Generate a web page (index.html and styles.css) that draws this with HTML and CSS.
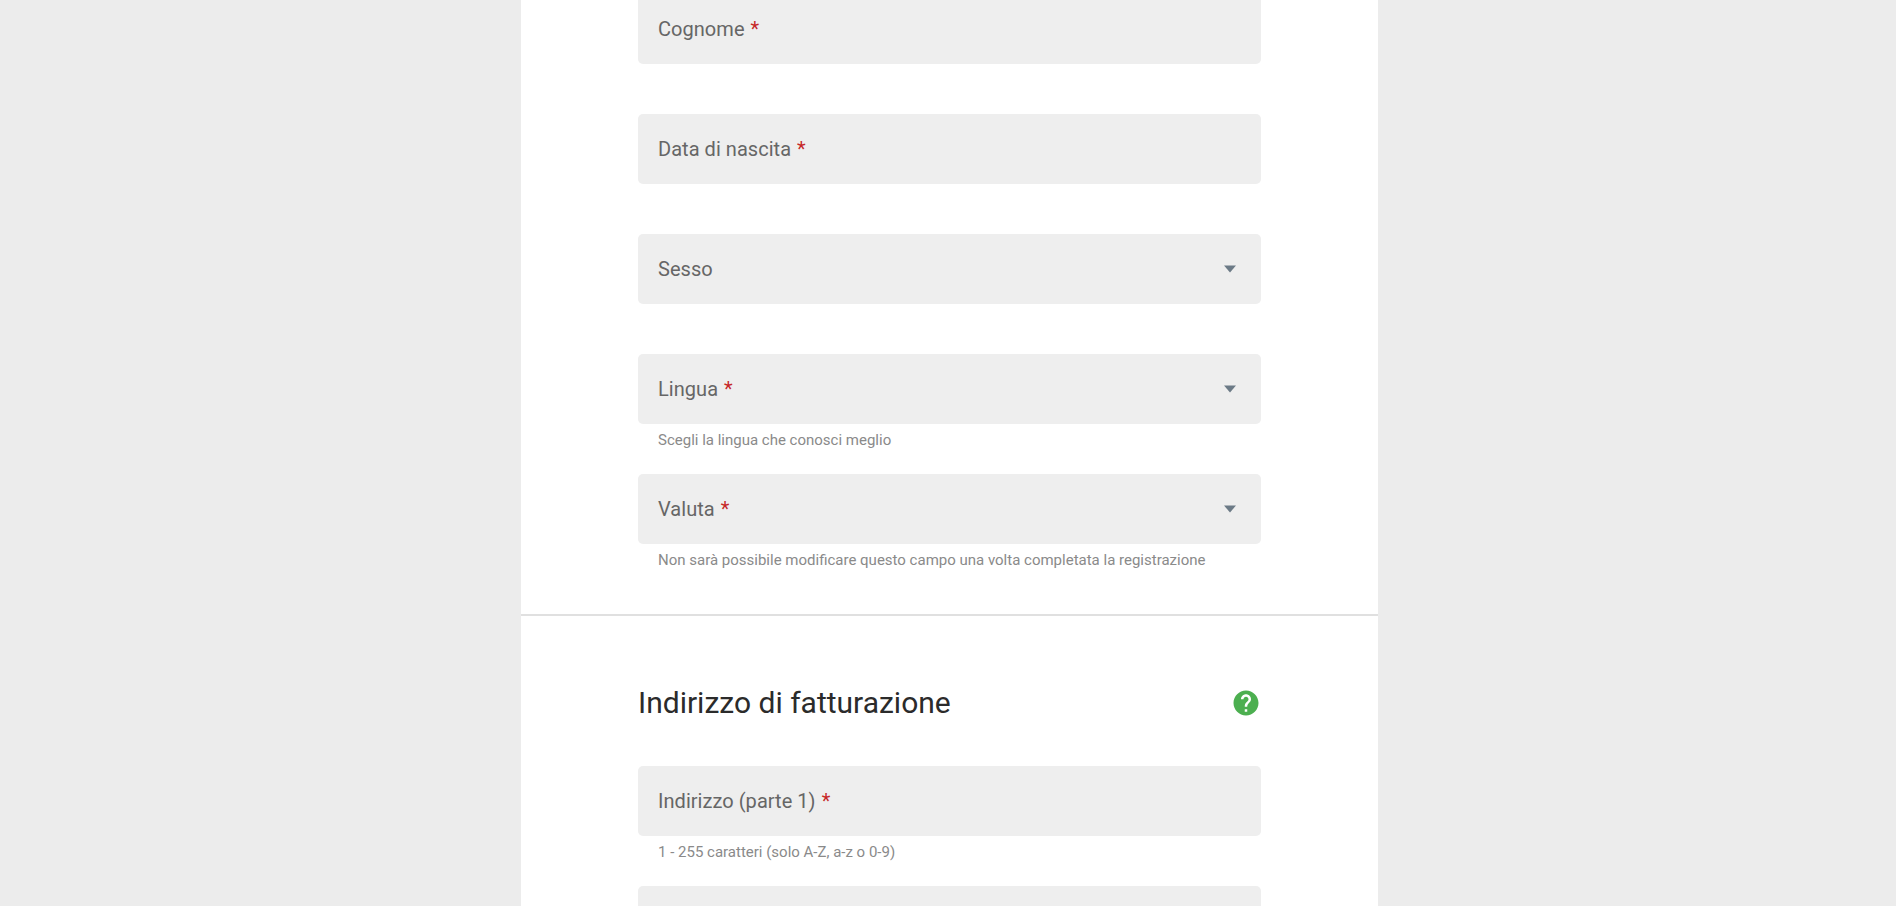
FILE: index.html
```html
<!DOCTYPE html>
<html lang="it">
<head>
  <meta charset="UTF-8">
  <title>Registrazione</title>
  <link rel="stylesheet" href="styles.css">
</head>
<body>
  <main class="card">
    <section class="section section-personal">
      <div class="form-group">
        <div class="field"><span class="label">Cognome <span class="required">*</span></span></div>
      </div>
      <div class="form-group">
        <div class="field"><span class="label">Data di nascita <span class="required">*</span></span></div>
      </div>
      <div class="form-group">
        <div class="field">
          <span class="label">Sesso</span>
          <svg class="arrow" viewBox="0 0 12 8"><path d="M0 0.5h12L6 7.5z"/></svg>
        </div>
      </div>
      <div class="form-group">
        <div class="field">
          <span class="label">Lingua <span class="required">*</span></span>
          <svg class="arrow" viewBox="0 0 12 8"><path d="M0 0.5h12L6 7.5z"/></svg>
        </div>
        <p class="helper">Scegli la lingua che conosci meglio</p>
      </div>
      <div class="form-group">
        <div class="field">
          <span class="label">Valuta <span class="required">*</span></span>
          <svg class="arrow" viewBox="0 0 12 8"><path d="M0 0.5h12L6 7.5z"/></svg>
        </div>
        <p class="helper">Non sarà possibile modificare questo campo una volta completata la registrazione</p>
      </div>
    </section>

    <section class="section section-billing">
      <div class="section-header">
        <h2>Indirizzo di fatturazione</h2>
        <svg class="help" viewBox="0 0 24 24"><path d="M12 2C6.480 2 2 6.480 2 12s4.480 10 10 10 10-4.480 10-10S17.520 2 12 2zm1 17h-2v-2h2v2zm2.070-7.750l-.9.920C13.450 12.900 13 13.500 13 15h-2v-.5c0-1.100.450-2.100 1.170-2.830l1.240-1.260c.370-.360.590-.860.590-1.410 0-1.100-.9-2-2-2s-2 .9-2 2H8c0-2.210 1.790-4 4-4s4 1.790 4 4c0 .880-.360 1.680-.930 2.250z"/></svg>
      </div>
      <div class="form-group">
        <div class="field"><span class="label">Indirizzo (parte 1) <span class="required">*</span></span></div>
        <p class="helper">1 - 255 caratteri (solo A-Z, a-z o 0-9)</p>
      </div>
      <div class="form-group">
        <div class="field"></div>
      </div>
    </section>
  </main>
</body>
</html>
```
FILE: styles.css
```css
* { box-sizing: border-box; }
body { margin: 0; height: 906px; overflow: hidden; background: #ececec; font-family: Roboto, "Liberation Sans", sans-serif; }
.card { width: 857px; height: 912px; margin: -6px 0 0 521px; overflow: hidden; background: #fff; }
.section { padding: 0 117px; }
.section-personal { height: 622px; border-bottom: 2px solid #e0e0e0; }
.section-billing { padding-top: 62px; }
.form-group { height: 120px; }
.field { display: flex; align-items: center; justify-content: space-between; height: 70px; padding: 0 25px 0 20px; background: #eee; border-radius: 5px; }
.label { font-size: 20px; line-height: 24px; letter-spacing: 0.04px; color: #666; }
.required { margin-left: 1px; color: #c62828; }
.arrow { width: 12px; height: 8px; fill: #6c7a86; }
.helper { margin: 0; padding: 6px 20px 0; font-size: 15px; line-height: 20px; color: #8a8a8a; white-space: nowrap; }
.section-header { display: flex; align-items: center; justify-content: space-between; height: 50px; margin-bottom: 38px; }
h2 { margin: 0; font-size: 30px; line-height: 40px; font-weight: 400; color: #2b2b2b; }
.help { width: 30px; height: 30px; fill: #4caf50; }
```
